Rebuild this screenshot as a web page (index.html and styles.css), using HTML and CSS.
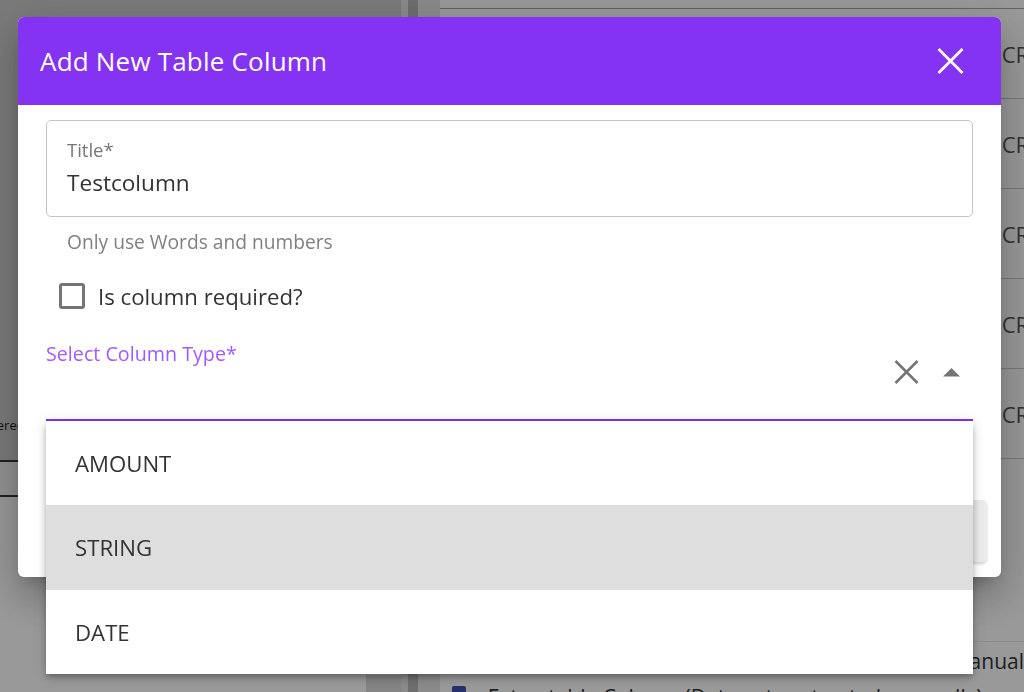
FILE: index.html
```html
<!DOCTYPE html>
<html lang="en">
<head>
<meta charset="utf-8">
<title>Add New Table Column</title>
<link rel="stylesheet" href="styles.css">
</head>
<body>
<div class="page">
  <aside class="side">
    <div class="side-top"><span class="side-note">Delivered</span></div>
    <div class="side-row"></div>
    <div class="side-rest"><div class="side-scroll"></div></div>
  </aside>
  <main class="main">
    <div class="gutter"><div class="gutter-bar"></div></div>
    <div class="content">
      <div class="table">
        <div class="trow"><span></span><span class="tcell">CREATED</span></div>
        <div class="trow"><span></span><span class="tcell">CREATED</span></div>
        <div class="trow"><span></span><span class="tcell">CREATED</span></div>
        <div class="trow"><span></span><span class="tcell">CREATED</span></div>
        <div class="trow"><span></span><span class="tcell">CREATED</span></div>
      </div>
      <div class="band"></div>
      <div class="lower">
        <div class="lrow"><span class="ltext">Manual</span></div>
        <div class="lrow2"><span class="cb-blue"></span><span class="ltext2">Extractable Column (Data gets extracted manually)</span></div>
      </div>
    </div>
  </main>
</div>

<div class="backdrop"></div>

<section class="dialog">
  <header class="dlg-head">
    <h1 class="dlg-title">Add New Table Column</h1>
    <button class="close" aria-label="Close">
      <svg width="27" height="26" viewBox="0 0 27 26"><path d="M1.5 1 L25.5 25 M25.5 1 L1.5 25" stroke="#fff" stroke-width="2.8" fill="none"/></svg>
    </button>
  </header>
  <div class="dlg-body">
    <div class="field">
      <div class="field-label">Title*</div>
      <div class="field-value">Testcolumn</div>
    </div>
    <p class="helper">Only use Words and numbers</p>
    <div class="check">
      <span class="box"></span>
      <span class="check-label">Is column required?</span>
    </div>
    <div class="select">
      <div class="select-label">Select Column Type*</div>
      <div class="select-icons">
        <svg class="clear" width="25" height="24" viewBox="0 0 25 24"><path d="M1.5 1 L23.5 23 M23.5 1 L1.5 23" stroke="#757575" stroke-width="2.6" fill="none"/></svg>
        <svg class="arrow" width="17" height="9" viewBox="0 0 17 9"><polygon points="0,8.5 8.5,0 17,8.5" fill="#757575"/></svg>
      </div>
    </div>
  </div>
  <footer class="dlg-foot">
    <button class="btn">Cancel</button>
    <button class="btn btn-save">Save</button>
  </footer>
</section>

<ul class="menu">
  <li class="menu-item">AMOUNT</li>
  <li class="menu-item is-hover">STRING</li>
  <li class="menu-item">DATE</li>
</ul>
</body>
</html>
```

FILE: styles.css
```css
* { box-sizing: border-box; }

html, body {
  margin: 0;
  padding: 0;
  width: 1024px;
  height: 692px;
  overflow: hidden;
  font-family: "Open Sans", "Noto Sans", sans-serif;
  color: #333;
}

/* ---------- underlying page ---------- */
.page {
  display: flex;
  width: 1024px;
  height: 692px;
  background: #fff;
}

.side {
  width: 408px;
  display: flex;
  flex-direction: column;
}

.side-top {
  height: 460px;
  background: #cccccc;
  display: flex;
  align-items: flex-end;
  padding-bottom: 26px;
  overflow: hidden;
}

.side-note {
  font-size: 13px;
  color: #222;
  text-indent: -33px;
  display: block;
  white-space: nowrap;
}

.side-row {
  height: 37px;
  border-top: 2px solid #3a3a3a;
  border-bottom: 2px solid #3a3a3a;
  background: #f4f4f4;
}

.side-rest {
  flex: 1;
  display: flex;
  justify-content: flex-end;
  align-items: flex-end;
}

.side-scroll {
  width: 35px;
  height: 17px;
  background: #dcdcdc;
}

.main {
  flex: 1;
  display: flex;
}

.gutter {
  width: 39px;
  background: #e6e6e6;
  padding-left: 7px;
}

.gutter-bar {
  width: 10px;
  height: 100%;
  background: #b8b8b8;
}

.content {
  flex: 1;
  display: flex;
  flex-direction: column;
}

.table {
  margin-top: 8px;
  border-top: 1px solid #a8a8a8;
}

.trow {
  height: 90px;
  display: grid;
  grid-template-columns: 543px 1fr;
  align-items: center;
  border-bottom: 1px solid #c8c8c8;
}

.tcell {
  padding-left: 19px;
  font-size: 22px;
  color: #555;
  white-space: nowrap;
  overflow: hidden;
}

.band {
  margin-top: 146px;
  height: 7px;
  background: #e0e0e0;
}

.lower {
  margin-top: 36px;
  border-top: 1px solid #e6e6e6;
}

.lrow {
  height: 38px;
  padding-left: 511px;
  display: flex;
  align-items: center;
  white-space: nowrap;
  overflow: hidden;
}

.ltext {
  font-size: 21px;
  color: #333;
}

.lrow2 {
  display: flex;
  align-items: flex-start;
  gap: 22px;
  padding-left: 12px;
  padding-top: 6px;
  white-space: nowrap;
  overflow: hidden;
}

.cb-blue {
  width: 14px;
  height: 14px;
  background: #3f51b5;
  border-radius: 2px;
  flex: none;
}

.ltext2 {
  font-size: 21px;
  color: #333;
  line-height: 22px;
}

/* ---------- backdrop ---------- */
.backdrop {
  position: fixed;
  inset: 0;
  background: rgba(0, 0, 0, 0.4);
}

/* ---------- dialog ---------- */
.dialog {
  position: fixed;
  left: 18px;
  top: 17px;
  width: 983px;
  height: 560px;
  background: #fff;
  border-radius: 6px;
  overflow: hidden;
  display: flex;
  flex-direction: column;
  box-shadow: 0 11px 15px -7px rgba(0,0,0,.2), 0 24px 38px 3px rgba(0,0,0,.14), 0 9px 46px 8px rgba(0,0,0,.12);
}

.dlg-head {
  height: 88px;
  flex: none;
  background: #8433f2;
  display: flex;
  align-items: center;
  justify-content: space-between;
  padding: 0 37px 0 22px;
}

.dlg-title {
  margin: 0;
  font-size: 26px;
  font-weight: 400;
  color: #fff;
  letter-spacing: 0.2px;
}

.close {
  border: 0;
  padding: 0;
  background: transparent;
  width: 27px;
  height: 26px;
  display: flex;
}

.dlg-body {
  flex: 1;
  padding: 15px 28px 0;
}

.field {
  height: 97px;
  border: 1px solid #c4c4c4;
  border-radius: 5px;
  padding: 19px 20px 0;
}

.field-label {
  font-size: 18.5px;
  line-height: 20px;
  color: #777;
}

.field-value {
  margin-top: 8px;
  font-size: 22.6px;
  line-height: 30px;
  color: #333;
}

.helper {
  margin: 13px 0 0 21px;
  font-size: 19.2px;
  line-height: 24px;
  color: #808080;
}

.check {
  margin-top: 29px;
  padding-left: 13px;
  display: flex;
  align-items: center;
  gap: 13px;
  height: 26px;
}

.box {
  width: 26px;
  height: 26px;
  border: 3px solid #757575;
  border-radius: 3px;
  flex: none;
}

.check-label {
  font-size: 22.2px;
  color: #333;
}

.select {
  margin-top: 33px;
  height: 80px;
  border-bottom: 3px solid #8433f2;
  display: flex;
  align-items: flex-start;
  justify-content: space-between;
  padding-right: 13px;
}

.select-label {
  font-size: 19.7px;
  line-height: 24px;
  color: #a25cf5;
}

.select-icons {
  margin-top: 18px;
  display: flex;
  align-items: center;
  gap: 24px;
}

.dlg-foot {
  flex: none;
  display: flex;
  justify-content: flex-end;
  gap: 16px;
  padding: 0 14px 15px;
}

.btn {
  height: 62px;
  min-width: 110px;
  border: 0;
  border-radius: 5px;
  font-family: inherit;
  font-size: 18px;
  background: #fff;
  color: #8433f2;
}

.btn-save {
  background: #ececec;
  color: #aaa;
  box-shadow: 0 2px 3px rgba(0,0,0,.18);
}

/* ---------- dropdown menu ---------- */
.menu {
  position: fixed;
  left: 46px;
  top: 421px;
  width: 927px;
  margin: 0;
  padding: 0;
  list-style: none;
  background: #fff;
  box-shadow: 0 3px 5px -1px rgba(0,0,0,.2), 0 5px 8px 0 rgba(0,0,0,.14), 0 1px 14px 0 rgba(0,0,0,.12);
}

.menu-item {
  height: 84px;
  padding-left: 29px;
  display: flex;
  align-items: center;
  font-size: 22.2px;
  color: #333;
}

.menu-item.is-hover {
  background: #dedede;
  height: 85px;
}
```
